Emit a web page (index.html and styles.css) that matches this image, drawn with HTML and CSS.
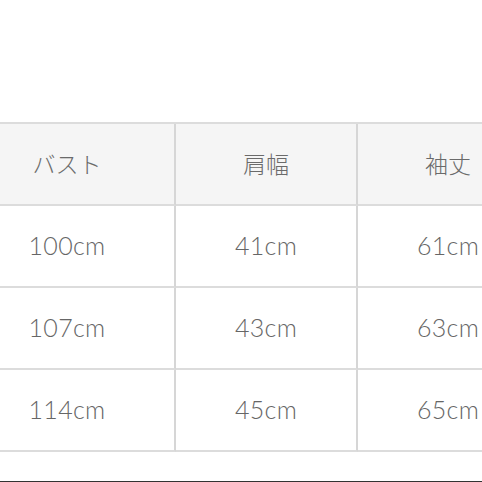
FILE: index.html
```html
<!DOCTYPE html>
<html lang="ja">
<head>
<meta charset="utf-8">
<link rel="stylesheet" href="styles.css">
</head>
<body>
<div class="page">
  <div class="table">
    <div class="cell head c1">バスト</div>
    <div class="cell head c2">肩幅</div>
    <div class="cell head c3">袖丈</div>
    <div class="cell c1">100cm</div>
    <div class="cell c2">41cm</div>
    <div class="cell c3">61cm</div>
    <div class="cell c1">107cm</div>
    <div class="cell c2">43cm</div>
    <div class="cell c3">63cm</div>
    <div class="cell c1">114cm</div>
    <div class="cell c2">45cm</div>
    <div class="cell c3">65cm</div>
  </div>
  <div class="bottom"></div>
</div>
</body>
</html>
```
FILE: styles.css
```css
html, body {
  margin: 0;
  padding: 0;
  background: #ffffff;
}
.page {
  width: 482px;
  height: 482px;
  overflow: hidden;
  position: relative;
  background: #ffffff;
}
.table {
  margin-top: 122px;
  margin-left: -40px;
  display: grid;
  grid-template-columns: 216px 182px 182px;
  grid-template-rows: 82px 82px 82px 82px;
  width: 580px;
  border-top: 2px solid #dcdcdc;
}
.cell {
  display: flex;
  align-items: center;
  justify-content: center;
  border-bottom: 2px solid #dcdcdc;
  border-right: 2px solid #d6d6d6;
  font-family: "Lato", "Noto Sans CJK JP", sans-serif;
  font-weight: 300;
  font-size: 25px;
  letter-spacing: 0.3px;
  color: #666666;
  box-sizing: border-box;
  padding-bottom: 2px;
}
.head {
  background: #f5f5f5;
  font-family: "Noto Sans CJK JP", sans-serif;
  font-weight: 300;
  font-size: 23px;
  letter-spacing: 0;
  color: #6a6a6a;
}
.bottom {
  position: absolute;
  left: 0;
  right: 0;
  bottom: 0;
  height: 1px;
  background: #333333;
}
```
